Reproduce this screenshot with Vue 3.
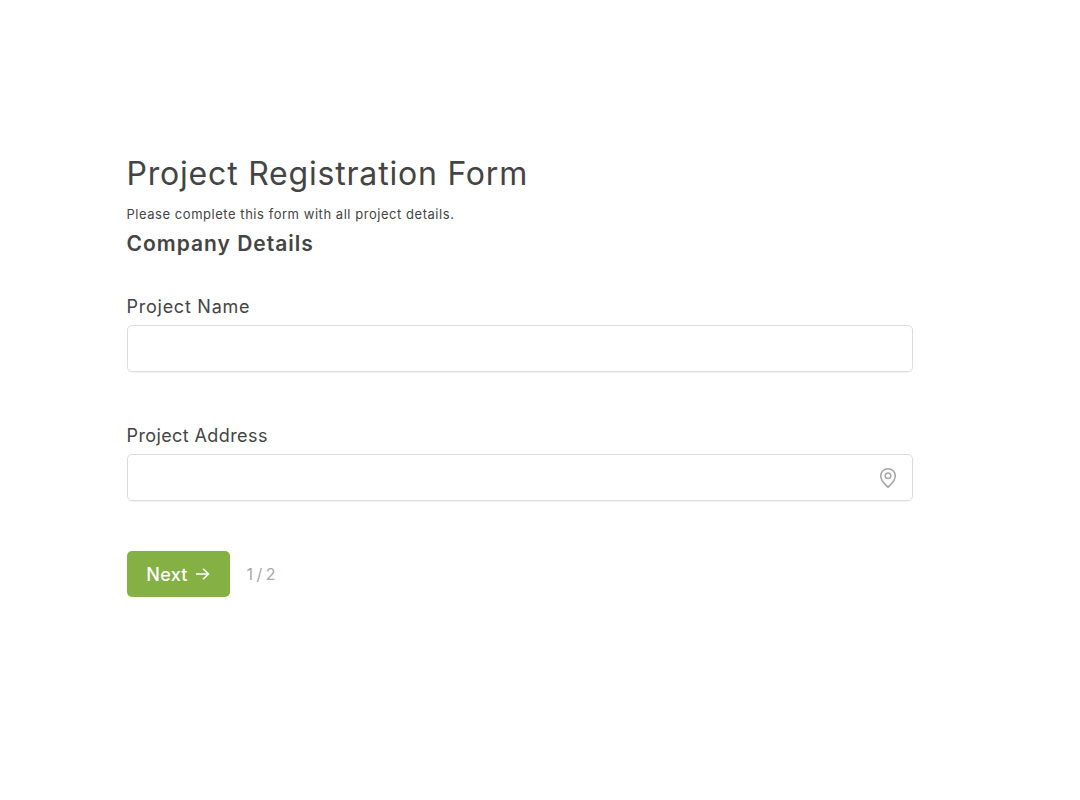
<script setup>
</script>

<template>
  <main class="page">
    <h1 class="title">Project Registration Form</h1>
    <p class="intro">Please complete this form with all project details.</p>
    <h2 class="section">Company Details</h2>
    <div class="field first">
      <label class="label name">Project Name</label>
      <div class="input"></div>
    </div>
    <div class="field second">
      <label class="label address">Project Address</label>
      <div class="input with-icon">
        <svg class="pin" width="18" height="22" viewBox="0 0 18 22" fill="none" stroke="#a6a6a6" stroke-width="1.5">
          <path d="M9 20.500C7.500 18.300 1.700 14.300 1.700 9a7.300 7.300 0 0 1 14.600 0c0 5.300-5.800 9.300-7.300 11.500z" stroke-linejoin="round" />
          <circle cx="9" cy="8.800" r="2.800" />
        </svg>
      </div>
    </div>
    <div class="actions">
      <button class="next">Next
        <svg width="15" height="14" viewBox="0 0 15 14" fill="none" stroke="#fff" stroke-width="1.500">
          <path d="M1 7h12.500M8 1.800 13.500 7 8 12.200" />
        </svg>
      </button>
      <span class="steps">1 / 2</span>
    </div>
  </main>
</template>

<style>
body { background: #fff; }
</style>

<style scoped>
.page {
  box-sizing: border-box;
  width: 1080px;
  height: 800px;
  padding: 156px 167px 0 126.5px;
  font-family: "Inter", "Open Sans", sans-serif;
  color: #444;
}
.title { margin: 0; font-size: 32px; line-height: 36px; font-weight: 400; letter-spacing: 0.8px; }
.intro { margin: 14px 0 0; font-size: 13px; line-height: 16px; letter-spacing: 0.54px; }
.section { margin: 9px 0 0; font-size: 21px; line-height: 26px; font-weight: 600; letter-spacing: 1px; }
.field.first { margin-top: 38px; }
.field.second { margin-top: 52px; }
.label { display: block; font-size: 18px; line-height: 24px; margin-bottom: 6px; }
.label.name { letter-spacing: 0.75px; }
.label.address { letter-spacing: 0.4px; }
.input {
  box-sizing: border-box;
  height: 47px;
  border: 1px solid #dcdcdc;
  border-radius: 5px;
  box-shadow: 0 1px 1px rgba(0, 0, 0, 0.04);
  display: flex;
  align-items: center;
  justify-content: flex-end;
  padding-right: 15px;
}
.actions { display: flex; align-items: center; gap: 17px; margin-top: 50px; }
.next {
  width: 103px;
  height: 46px;
  border: none;
  border-radius: 5px;
  background: #84b044;
  color: #fff;
  font: 500 18px "Inter", sans-serif;
  letter-spacing: 0.3px;
  display: flex;
  align-items: center;
  justify-content: center;
  gap: 7px;
}
.steps { color: #a8a8a8; font-size: 16px; word-spacing: -1px; }
</style>
